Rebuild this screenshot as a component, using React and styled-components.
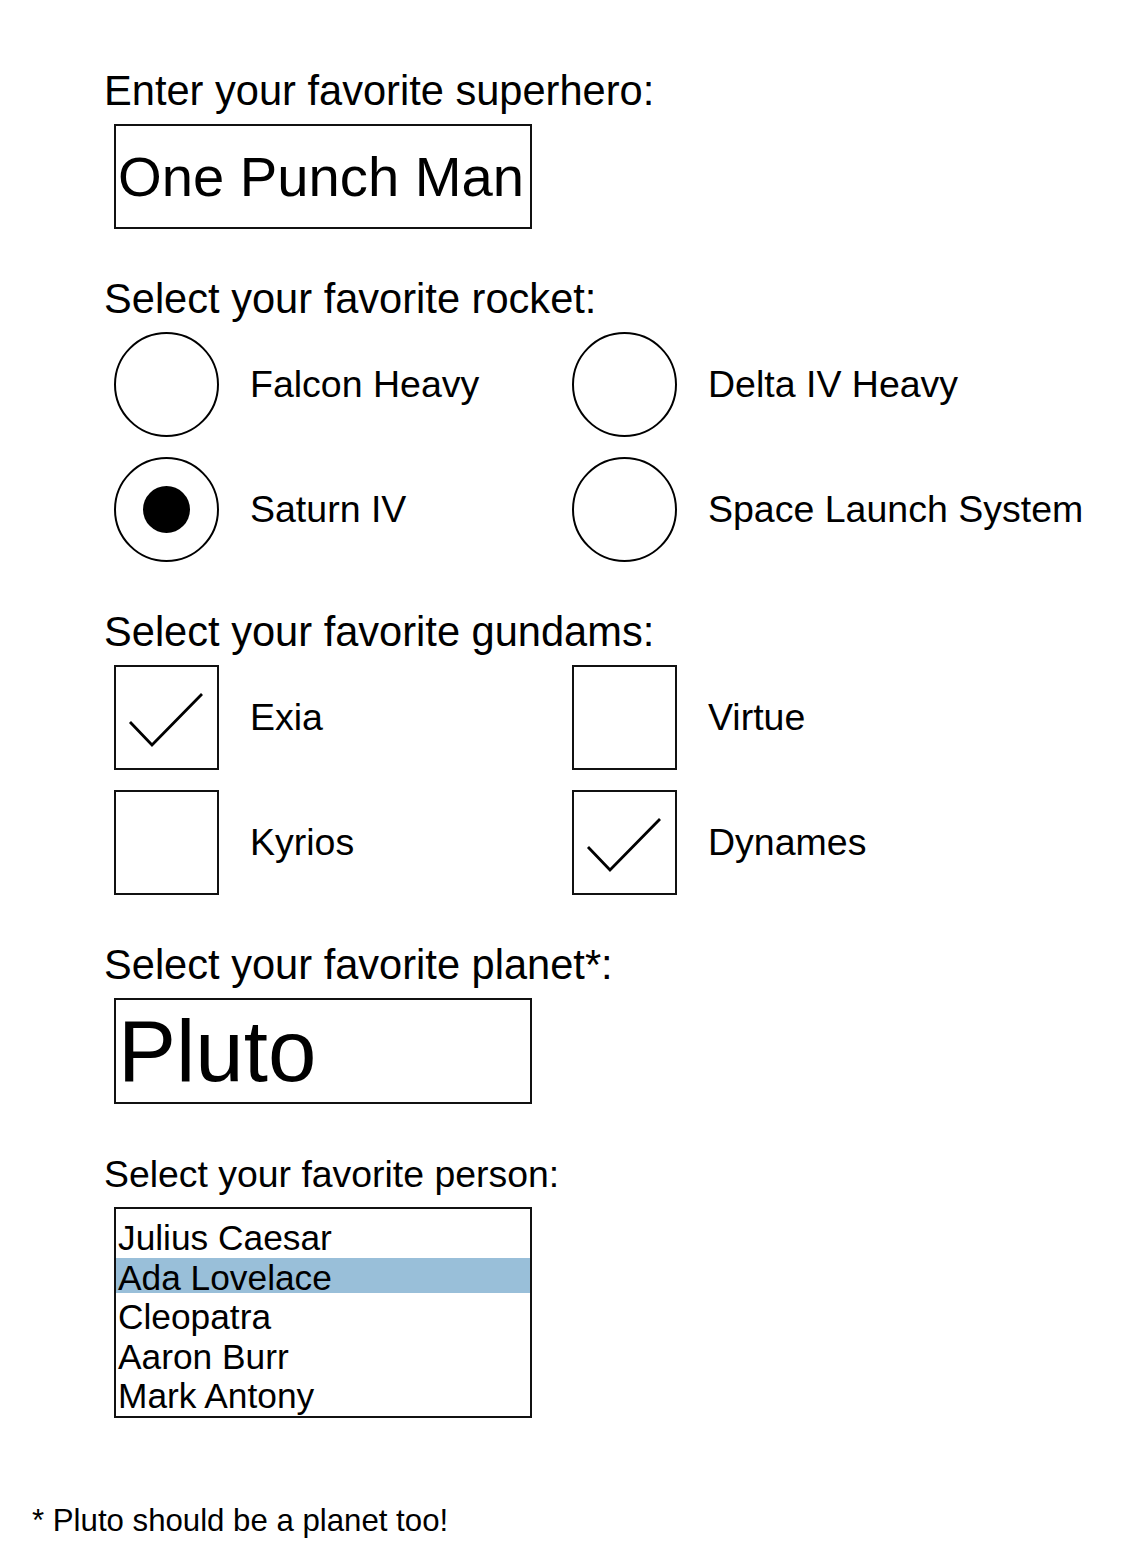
import React from 'react';
import styled, { createGlobalStyle } from 'styled-components';

const GlobalStyle = createGlobalStyle`
  body {
    margin: 0;
    background: #fff;
    color: #000;
    font-family: "Liberation Sans", Arial, sans-serif;
  }
`;

const Page = styled.div`
  width: 1146px;
  min-height: 1563px;
  padding-top: 67px;
  box-sizing: border-box;
`;

const Form = styled.form`
  display: flex;
  flex-direction: column;
  gap: 46px;
  padding-left: 104px;
`;

const Field = styled.div`
  display: flex;
  flex-direction: column;
  gap: ${(p) => p.$gap || 9}px;
  margin-top: ${(p) => p.$push || 0}px;
`;

const Label = styled.div`
  font-size: ${(p) => p.$size || 41.6}px;
  line-height: normal;
`;

const TextBox = styled.input`
  margin-left: 10px;
  width: 418px;
  height: 105px;
  box-sizing: border-box;
  border: 2px solid #111;
  padding: 0 2px;
  font-family: inherit;
  font-size: 56.2px;
  color: #000;
  background: #fff;
  outline: none;
`;

const OptionGrid = styled.div`
  margin-left: 10px;
  display: grid;
  grid-template-columns: 458px 458px;
  row-gap: 20px;
`;

const Option = styled.label`
  display: flex;
  align-items: center;
  gap: 31px;
  font-size: 37.5px;
  white-space: nowrap;
`;

const RadioMark = styled.span`
  flex: none;
  width: 105px;
  height: 105px;
  box-sizing: border-box;
  border: 2px solid #000;
  border-radius: 50%;
  display: flex;
  align-items: center;
  justify-content: center;

  &::after {
    content: '';
    width: 47px;
    height: 47px;
    border-radius: 50%;
    background: #000;
    display: ${(p) => (p.$on ? 'block' : 'none')};
  }
`;

const CheckMark = styled.span`
  flex: none;
  width: 105px;
  height: 105px;
  box-sizing: border-box;
  border: 2px solid #111;
  display: flex;

  svg {
    width: 101px;
    height: 101px;
  }
`;

const SelectBox = styled.div`
  margin-left: 10px;
  width: 418px;
  height: 106px;
  box-sizing: border-box;
  border: 2px solid #111;
  display: flex;
  align-items: center;
  font-size: 87px;
  padding-left: 2px;
`;

const ListBox = styled.div`
  margin-left: 10px;
  width: 418px;
  box-sizing: border-box;
  border: 2px solid #111;
  padding: 9px 2px 0;
`;

const ListItem = styled.div`
  height: 39.5px;
  line-height: 39.5px;
  font-size: 35.3px;
  white-space: nowrap;
  margin: 0 -2px;
  padding: 0 2px;
  background: ${(p) =>
    p.$selected
      ? 'linear-gradient(#99bfd9, #99bfd9) 0 -1px / 100% 36px no-repeat'
      : 'none'};
`;

const Footnote = styled.p`
  margin: 85px 0 0 32px;
  font-size: 31.2px;
  line-height: normal;
`;

const rockets = [
  { name: 'Falcon Heavy', on: false },
  { name: 'Delta IV Heavy', on: false },
  { name: 'Saturn IV', on: true },
  { name: 'Space Launch System', on: false },
];

const gundams = [
  { name: 'Exia', on: true },
  { name: 'Virtue', on: false },
  { name: 'Kyrios', on: false },
  { name: 'Dynames', on: true },
];

const people = ['Julius Caesar', 'Ada Lovelace', 'Cleopatra', 'Aaron Burr', 'Mark Antony'];

const Check = ({ on }) => (
  <CheckMark>
    {on && (
      <svg viewBox="0 0 101 101">
        <path d="M14 55 L36 78 L86 27" fill="none" stroke="#000" strokeWidth="2.8" />
      </svg>
    )}
  </CheckMark>
);

export default function App() {
  return (
    <Page>
      <GlobalStyle />
      <Form onSubmit={(e) => e.preventDefault()}>
        <Field>
          <Label>Enter your favorite superhero:</Label>
          <TextBox type="text" defaultValue="One Punch Man" />
        </Field>

        <Field>
          <Label>Select your favorite rocket:</Label>
          <OptionGrid>
            {rockets.map((r) => (
              <Option key={r.name}>
                <RadioMark $on={r.on} />
                {r.name}
              </Option>
            ))}
          </OptionGrid>
        </Field>

        <Field>
          <Label>Select your favorite gundams:</Label>
          <OptionGrid>
            {gundams.map((g) => (
              <Option key={g.name}>
                <Check on={g.on} />
                {g.name}
              </Option>
            ))}
          </OptionGrid>
        </Field>

        <Field>
          <Label>Select your favorite planet*:</Label>
          <SelectBox>Pluto</SelectBox>
        </Field>

        <Field $gap={11} $push={3}>
          <Label $size={37.4}>Select your favorite person:</Label>
          <ListBox>
            {people.map((p) => (
              <ListItem key={p} $selected={p === 'Ada Lovelace'}>
                {p}
              </ListItem>
            ))}
          </ListBox>
        </Field>
      </Form>
      <Footnote>* Pluto should be a planet too!</Footnote>
    </Page>
  );
}
